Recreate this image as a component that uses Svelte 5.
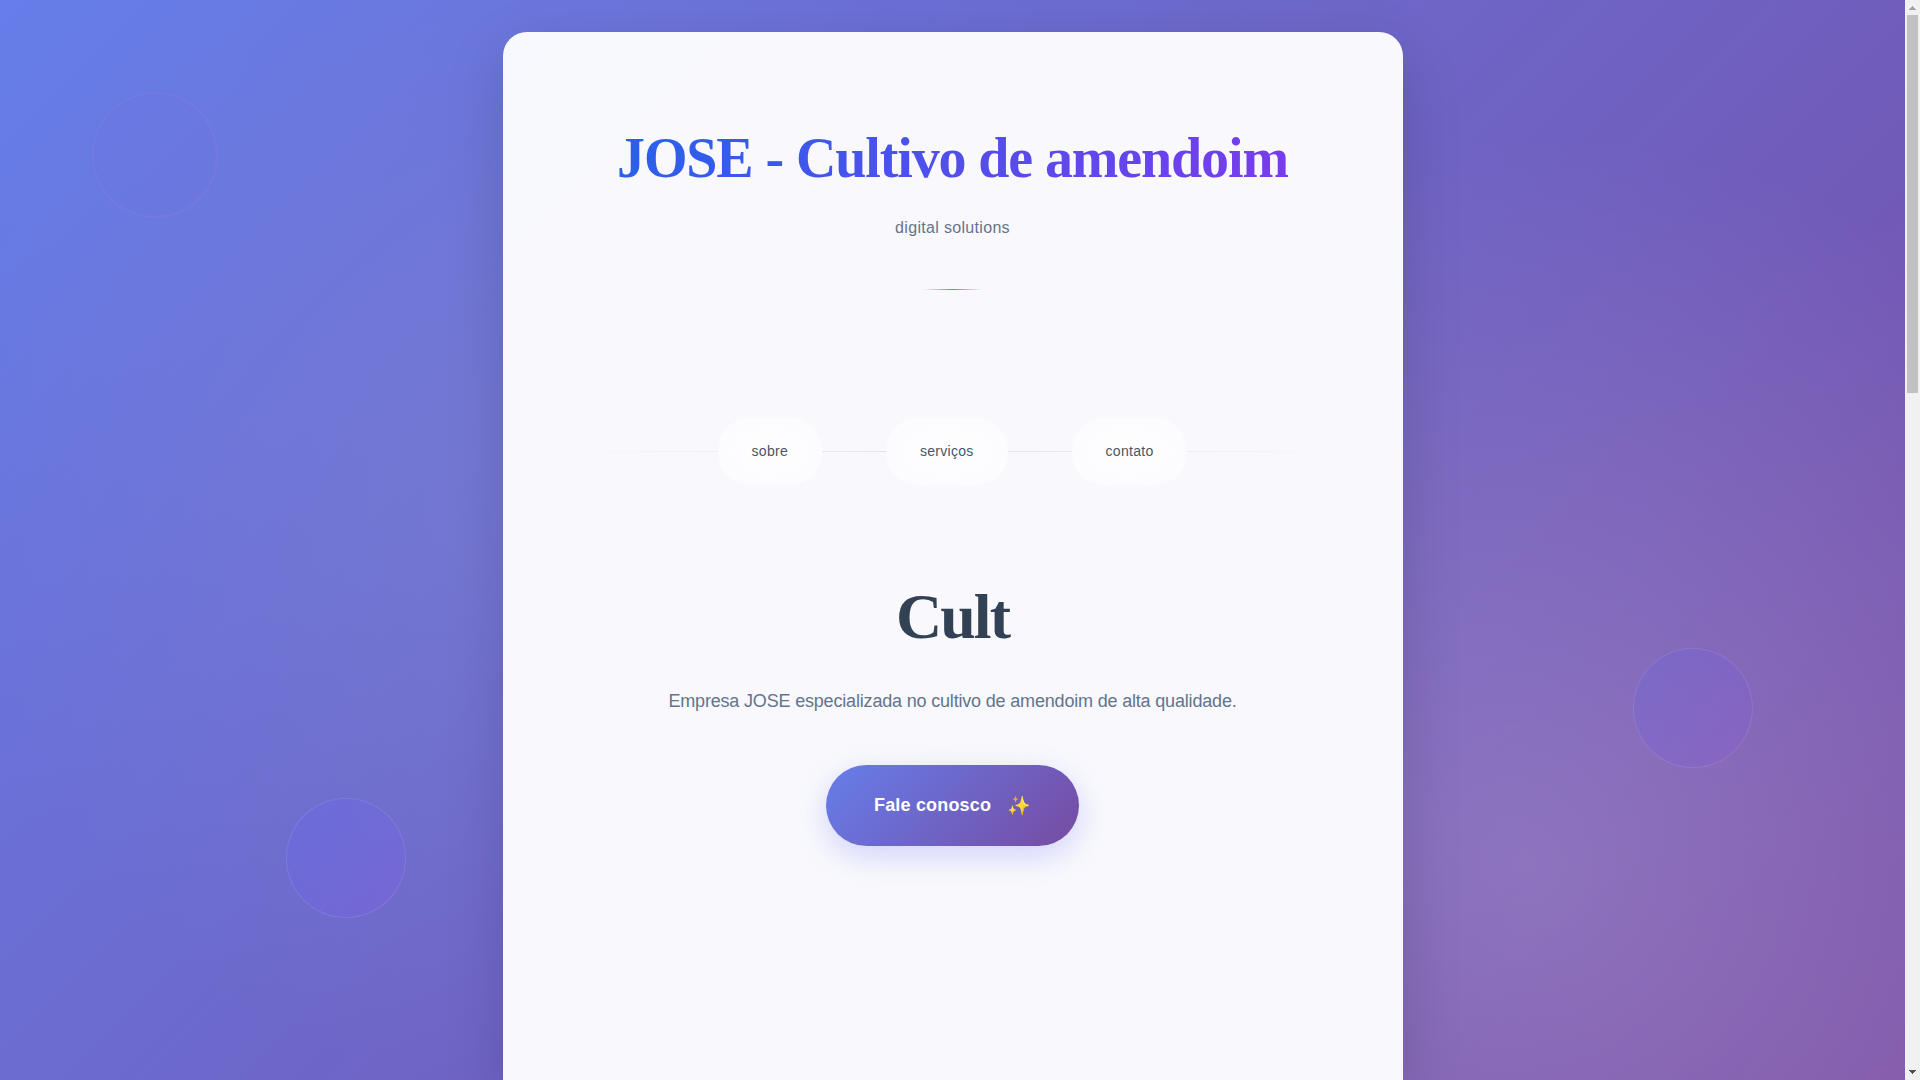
<script>
  const links = [
    { label: 'sobre', href: '#sobre' },
    { label: 'serviços', href: '#servicos' },
    { label: 'contato', href: '#contato' }
  ];
</script>

<div class="window">
  <div class="page">
    <div class="orb orb-a"></div>
    <div class="orb orb-b"></div>
    <div class="orb orb-c"></div>

    <main class="card">
      <header>
        <h1>JOSE - Cultivo de amendoim</h1>
        <p class="tagline">digital solutions</p>
        <div class="divider"></div>
      </header>

      <nav>
        {#each links as link}
          <a href={link.href}>{link.label}</a>
        {/each}
      </nav>

      <section class="hero">
        <h2>Cult</h2>
        <p>Empresa JOSE especializada no cultivo de amendoim de alta qualidade.</p>
        <button type="button">Fale conosco <span class="spark">✨</span></button>
      </section>
    </main>
  </div>

  <div class="scrollbar" aria-hidden="true">
    <svg viewBox="0 0 15 15"><path d="M7 6h1v1h1v1h1v1h1v1H4V9h1V8h1V7h1z" fill="#a3a3a3" /></svg>
    <div class="track"><div class="thumb"></div></div>
    <svg viewBox="0 0 15 15"><path d="M4 5h7v1h-1v1H9v1H8v1H7V8H6V7H5V6H4z" fill="#505050" /></svg>
  </div>
</div>

<style>
  :global(body) {
    margin: 0;
    font-family: 'Liberation Sans', Arial, sans-serif;
  }

  .window {
    display: flex;
    height: 100vh;
    overflow: hidden;
  }

  .page {
    position: relative;
    flex: 1;
    box-sizing: border-box;
    padding: 32px 24px 0;
    overflow: hidden;
    background:
      radial-gradient(circle at 80% 80%, rgba(255, 255, 255, 0.17) 0%, transparent 42%),
      radial-gradient(circle at 100% 100%, rgba(150, 110, 190, 0.2) 0%, transparent 40%),
      radial-gradient(circle at 28% 45%, rgba(130, 135, 210, 0.4) 0%, transparent 40%),
      linear-gradient(135deg, #667eea 0%, #764ba2 100%);
  }

  .orb {
    position: absolute;
    box-sizing: border-box;
    width: 120px;
    height: 120px;
    border: 1px solid rgba(255, 255, 255, 0.1);
    border-radius: 50%;
    background: linear-gradient(135deg, rgba(99, 102, 241, 0.3), rgba(139, 92, 246, 0.2));
  }

  .orb-a {
    top: 92px;
    left: 92px;
    width: 126px;
    height: 126px;
    border: 2px solid rgba(135, 125, 226, 0.3);
    background: rgba(108, 116, 224, 0.3);
  }

  .orb-b {
    top: 60%;
    right: 8%;
    background: linear-gradient(135deg, rgba(105, 102, 220, 0.35), rgba(139, 92, 210, 0.3));
  }

  .orb-c {
    bottom: 15%;
    left: 15%;
  }

  .card {
    position: relative;
    box-sizing: border-box;
    max-width: 900px;
    min-height: 100%;
    margin: 0 auto;
    padding: 90px 64px 64px;
    border-radius: 24px 24px 0 0;
    background: linear-gradient(135deg, #f7f9fe 0%, #f9f9fd 16%, #f8f8fd 100%);
    box-shadow: 0 20px 60px rgba(0, 0, 0, 0.15);
    text-align: center;
  }

  h1,
  h2 {
    margin: 0;
    font-family: 'Liberation Serif', 'Times New Roman', serif;
    font-weight: 700;
  }

  h1 {
    display: inline-block;
    font-size: 56px;
    line-height: 72px;
    letter-spacing: -0.02em;
    color: transparent;
    background: linear-gradient(135deg, #2563eb 0%, #7c3aed 100%);
    background-clip: text;
    -webkit-background-clip: text;
  }

  .tagline {
    margin: 22px 0 0;
    font-size: 16px;
    line-height: 24px;
    letter-spacing: 0.02em;
    color: #64748b;
  }

  .divider {
    width: 60px;
    height: 1px;
    margin: 49px auto 0;
    background: linear-gradient(90deg, transparent, #06b6d4, transparent);
  }

  nav {
    display: flex;
    justify-content: center;
    gap: 64px;
    margin-top: 128px;
    background: linear-gradient(90deg, transparent, #dedee6, transparent) center / 100% 1px no-repeat;
  }

  nav a {
    padding: 24px 34px;
    border-radius: 32px;
    background: radial-gradient(closest-side, #fefeff, #fcfcfe);
    font-size: 14px;
    line-height: 19px;
    letter-spacing: 0.02em;
    color: #475569;
    text-decoration: none;
  }

  .hero {
    margin-top: 92px;
  }

  h2 {
    font-size: 64px;
    line-height: 80px;
    letter-spacing: -2px;
    color: #334155;
  }

  .hero p {
    margin: 28px 0 0;
    font-size: 18px;
    line-height: 32px;
    letter-spacing: -0.01em;
    color: #64748b;
  }

  button {
    display: inline-flex;
    align-items: center;
    gap: 16px;
    margin-top: 48px;
    padding: 28px 48px;
    border: 0;
    border-radius: 48px;
    background: linear-gradient(135deg, #667eea 0%, #764ba2 100%);
    box-shadow: 0 10px 30px rgba(99, 102, 241, 0.25);
    font-family: inherit;
    font-size: 18px;
    font-weight: 700;
    line-height: 25px;
    letter-spacing: 0.01em;
    color: #fff;
    cursor: pointer;
  }

  .spark {
    font-family: 'Noto Color Emoji', sans-serif;
    font-size: 19px;
    font-weight: 400;
  }

  .scrollbar {
    display: flex;
    flex-direction: column;
    width: 15px;
    background: #f1f1f1;
  }

  .scrollbar svg {
    width: 15px;
    height: 15px;
  }

  .track {
    flex: 1;
    padding: 0 2px;
  }

  .thumb {
    height: 36%;
    background: #c1c1c1;
  }
</style>
